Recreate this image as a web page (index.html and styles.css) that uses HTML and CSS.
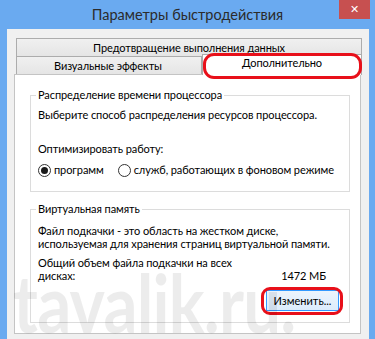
FILE: index.html
```html
<!DOCTYPE html>
<html lang="ru">
<head>
  <meta charset="UTF-8" />
  <title>Параметры быстродействия</title>
  <link rel="stylesheet" href="styles.css">
</head>
<body>
  <div class="window">
    <div class="titlebar">
      <span class="title">Параметры быстродействия</span>
      <button class="close">&#x2715;</button>
    </div>

    <div class="client">
      <!-- Tabs, two rows -->
      <div class="tabs">
        <div class="tab-row">
          <div class="tab">Предотвращение выполнения данных</div>
        </div>
        <div class="tab-row">
          <div class="tab tab-visual">Визуальные эффекты</div>
          <div class="tab active">Дополнительно</div>
        </div>
      </div>

      <div class="page">
        <fieldset class="group">
          <legend>Распределение времени процессора</legend>
          <p class="line">Выберите способ распределения ресурсов процессора.</p>
          <p class="line optimize">Оптимизировать работу:</p>
          <div class="radios">
            <label class="radio"><span class="dot checked"></span>программ</label>
            <label class="radio"><span class="dot"></span>служб, работающих в фоновом режиме</label>
          </div>
        </fieldset>

        <fieldset class="group vm">
          <legend>Виртуальная память</legend>
          <p class="line">Файл подкачки - это область на жестком диске,<br>используемая для хранения страниц виртуальной памяти.</p>
          <div class="total">
            <span class="total-label">Общий объем файла подкачки на всех<br>дисках:</span>
            <span class="total-value">1472 МБ</span>
          </div>
          <div class="actions">
            <button class="btn">Изменить...</button>
          </div>
        </fieldset>
      </div>
    </div>
  </div>

  <div class="watermark">tavalik.ru.</div>
</body>
</html>
```

FILE: styles.css
```css
:root {
  --frame: #6aaaf0;
  --face: #f0f0f0;
  --tab-border: #acacac;
  --group-border: #dcdcdc;
  --mark: #e8101a;
}

* {
  box-sizing: border-box;
}

body {
  margin: 0;
  width: 375px;
  height: 339px;
  overflow: hidden;
  position: relative;
  background: var(--frame);
  font-family: Lato, 'Liberation Sans', sans-serif;
  font-size: 11px;
  letter-spacing: -0.08px;
  color: #000;
}

.titlebar {
  position: relative;
  height: 29px;
  display: flex;
  justify-content: center;
  align-items: center;
  padding-bottom: 1px;
}

.title {
  font-size: 14.5px;
  letter-spacing: 0;
  color: #2b2b2b;
}

.close {
  position: absolute;
  top: 0;
  right: 5px;
  width: 31px;
  height: 19px;
  border: none;
  padding: 0;
  background: #c75050;
  color: #fff;
  font-size: 11px;
  font-weight: bold;
  font-family: 'DejaVu Sans', sans-serif;
}

.client {
  margin: 0 6px 0 7px;
  height: 310px;
  background: var(--face);
  padding: 9px 8px 0 7px;
}

/* Tabs */
.tabs {
  padding: 0 0 0 2px;
  margin-right: -1px;
}

.tab-row {
  display: flex;
}

.tab {
  flex: 1;
  height: 18px;
  line-height: 17px;
  text-align: center;
  white-space: nowrap;
  border: 1px solid var(--tab-border);
  border-bottom: none;
  background: linear-gradient(#f0f0f0, #e5e5e5);
}

.tab-visual {
  flex: 0 0 186px;
  padding-right: 2px;
}

.tab.active {
  position: relative;
  z-index: 1;
  height: 21px;
  margin-top: -2px;
  margin-bottom: -1px;
  padding-bottom: 3px;
  background: #fff;
  line-height: 16px;
}

.tab.active::after {
  content: "";
  position: absolute;
  top: -2px;
  left: 0;
  right: -1px;
  bottom: -4px;
  border: 3px solid var(--mark);
  border-radius: 11px;
}

.page {
  height: 260px;
  background: #fff;
  border: 1px solid #c4c4c4;
  padding: 13px 10px 0 15px;
}

/* Group boxes */
.group {
  margin: 0;
  padding: 6px 10px 14px 7px;
  border: 1px solid var(--group-border);
}

.group legend {
  padding: 0 2px;
  margin-left: -2px;
  line-height: 14px;
}

.group.vm {
  margin-top: 10px;
  padding-top: 8px;
  padding-bottom: 11px;
}

.line {
  margin: 0;
  line-height: 14px;
  white-space: nowrap;
}

.optimize {
  margin-top: 20px;
}

.radios {
  display: flex;
  gap: 14px;
  margin-top: 7px;
  line-height: 14px;
  white-space: nowrap;
}

.radio {
  display: flex;
  align-items: center;
  gap: 3px;
}

.dot {
  width: 13px;
  height: 13px;
  border: 1px solid #333;
  border-radius: 50%;
  background: #fff;
  display: flex;
  align-items: center;
  justify-content: center;
}

.dot.checked::before {
  content: "";
  width: 7px;
  height: 7px;
  border-radius: 50%;
  background: #1a1a1a;
}

.vm .line {
  line-height: 13px;
}

.total {
  display: flex;
  align-items: flex-end;
  margin-top: 6px;
  line-height: 13px;
  white-space: nowrap;
}

.total-value {
  margin-left: auto;
  margin-right: 13px;
}

.actions {
  display: flex;
  justify-content: flex-end;
  margin-top: 8px;
}

.btn {
  position: relative;
  width: 73px;
  height: 21px;
  padding: 0;
  font: inherit;
  color: #000;
  border: 1px solid #3399ff;
  background: linear-gradient(#ecf4fc, #dcecfc);
}

.btn::after {
  content: "";
  position: absolute;
  top: -4px;
  left: -6px;
  right: -5px;
  bottom: -5px;
  border: 3px solid var(--mark);
  border-radius: 9px;
}

.watermark {
  position: absolute;
  left: 13px;
  top: 254px;
  font-family: Lato, 'Liberation Sans', sans-serif;
  font-weight: bold;
  font-size: 80px;
  letter-spacing: -1px;
  transform: scaleX(0.84);
  transform-origin: left top;
  color: rgba(0, 0, 0, 0.075);
  pointer-events: none;
}
```
